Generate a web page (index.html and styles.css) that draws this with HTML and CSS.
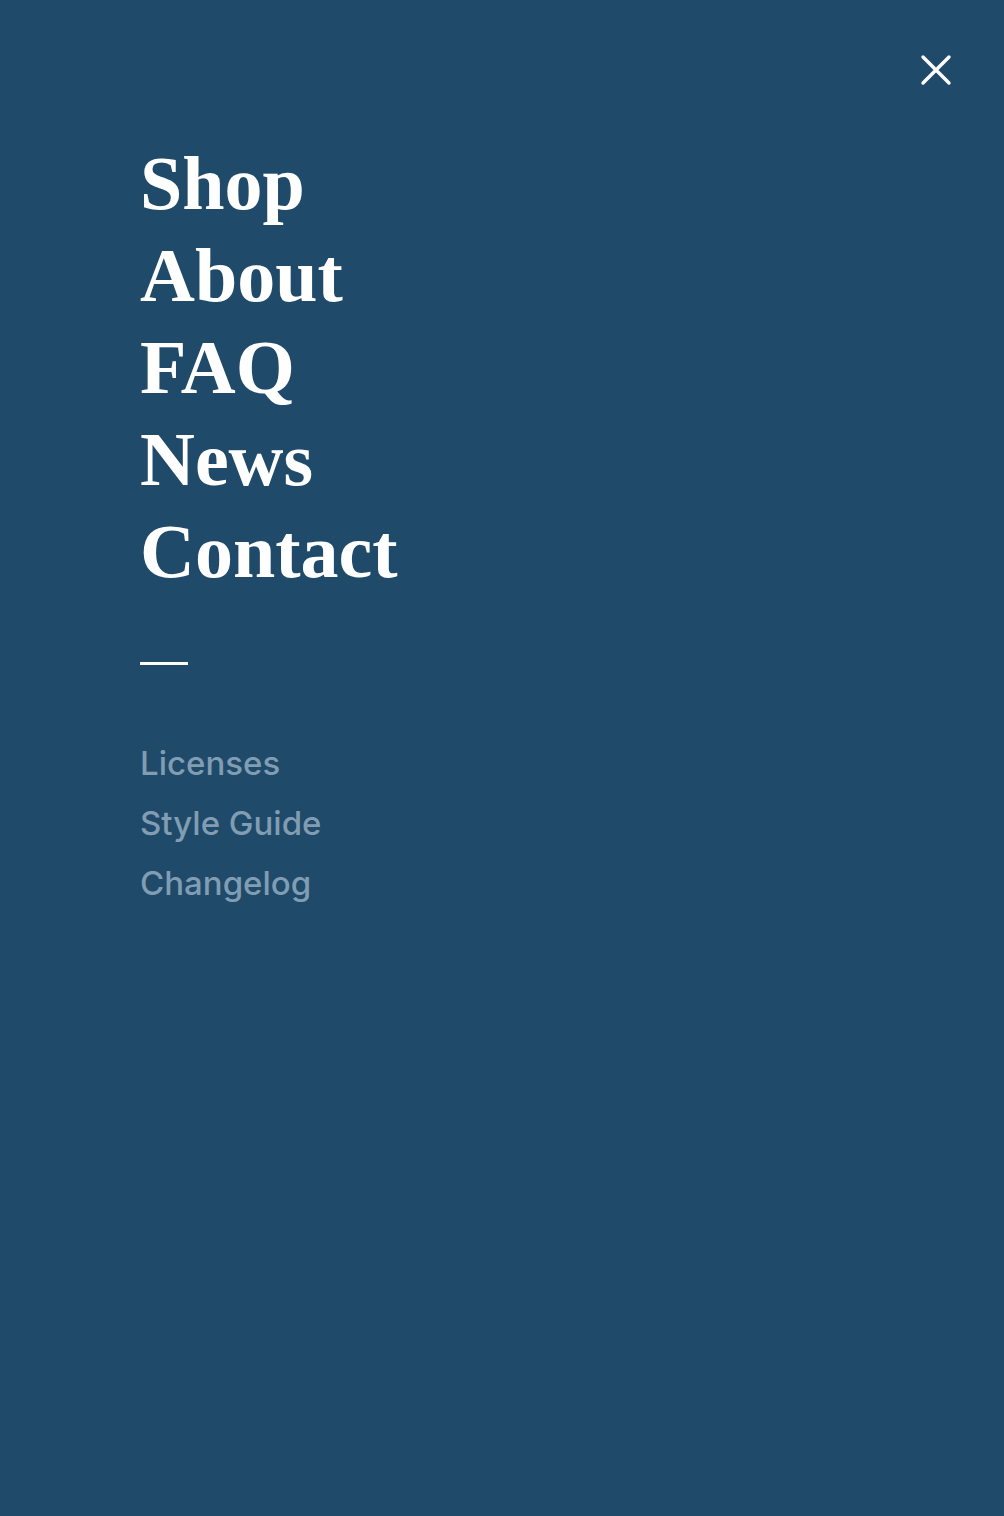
FILE: index.html
```html
<!DOCTYPE html>
<html>
<head>
<meta charset="utf-8">
<link rel="stylesheet" href="styles.css">
</head>
<body>
<div class="menu">
  <div class="topbar">
    <button class="close" aria-label="Close">
      <svg width="32" height="32" viewBox="0 0 32 32"><path d="M3 3 L29 29 M29 3 L3 29" stroke="#fff" stroke-width="3.4" stroke-linecap="round" fill="none"/></svg>
    </button>
  </div>
  <nav class="content">
    <ul class="primary">
      <li><a href="#">Shop</a></li>
      <li><a href="#">About</a></li>
      <li><a href="#">FAQ</a></li>
      <li><a href="#">News</a></li>
      <li><a href="#">Contact</a></li>
    </ul>
    <div class="divider"></div>
    <ul class="secondary">
      <li><a href="#">Licenses</a></li>
      <li><a href="#">Style Guide</a></li>
      <li><a href="#">Changelog</a></li>
    </ul>
  </nav>
</div>
</body>
</html>
```

FILE: styles.css
```css
html, body {
  margin: 0;
  padding: 0;
  background: #1f4a69;
}
.menu {
  min-height: 1516px;
  background: #1f4a69;
  box-sizing: border-box;
}
.topbar {
  display: flex;
  justify-content: flex-end;
  padding: 54px 52px 0 0;
}
.close {
  background: none;
  border: 0;
  padding: 0;
  width: 32px;
  height: 32px;
  display: block;
  cursor: pointer;
}
.close svg { display: block; }
.content {
  padding-left: 140px;
  padding-top: 51px;
}
ul {
  list-style: none;
  margin: 0;
  padding: 0;
}
a { text-decoration: none; }
.primary li {
  line-height: 92px;
  height: 92px;
}
.primary a {
  font-family: "Liberation Serif", serif;
  font-weight: 700;
  font-size: 76px;
  color: #ffffff;
}
.divider {
  width: 48px;
  height: 3px;
  background: #ffffff;
  margin-top: 65px;
  margin-left: 0;
}
.secondary {
  margin-top: 68px;
}
.secondary li {
  height: 60px;
  line-height: 60px;
}
.secondary a {
  font-family: Inter, sans-serif;
  font-weight: 500;
  font-size: 33px;
  color: #809db3;
  letter-spacing: 0;
}
```
